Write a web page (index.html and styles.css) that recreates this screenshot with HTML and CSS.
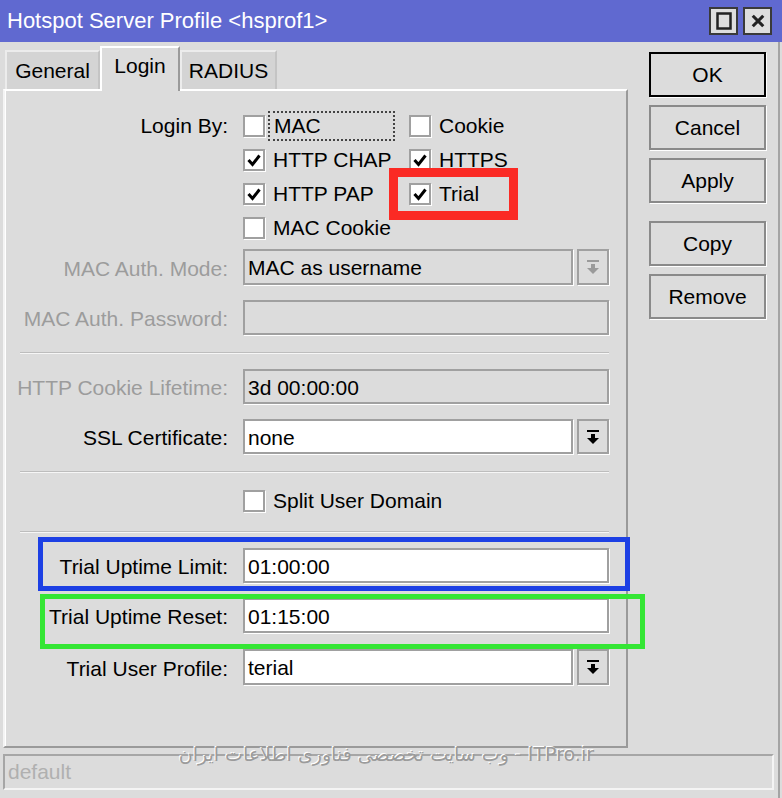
FILE: index.html
```html
<!DOCTYPE html>
<html lang="en">
<head>
  <meta charset="UTF-8" />
  <meta name="viewport" content="width=device-width, initial-scale=1.0" />
  <title>Hotspot Server Profile</title>
  <link rel="stylesheet" href="styles.css">
</head>
<body>
  <div class="window">
    <header class="titlebar">
      <span class="title">Hotspot Server Profile &lt;hsprof1&gt;</span>
      <div class="title-buttons">
        <span class="tbtn">
          <svg viewBox="0 0 16 18" width="16" height="18"><rect x="1.5" y="1.5" width="13" height="15" fill="none" stroke="#222" stroke-width="2.5"/></svg>
        </span>
        <span class="tbtn">
          <svg viewBox="0 0 16 16" width="14" height="14"><path d="M2 2 L14 14 M14 2 L2 14" stroke="#222" stroke-width="3.5"/></svg>
        </span>
      </div>
    </header>

    <div class="frame">
      <div class="content">
        <div class="left">
          <nav class="tabs">
            <span class="tab tab-general">General</span>
            <span class="tab tab-login active">Login</span>
            <span class="tab tab-radius">RADIUS</span>
          </nav>

          <section class="panel">
            <div class="row login-by">
              <label>Login By:</label>
              <div class="checks">
                <span class="check"><span class="box"></span><span class="focus">MAC</span></span>
                <span class="check"><span class="box"></span><span class="text">Cookie</span></span>
                <span class="check"><span class="box checked"><svg viewBox="0 0 14 14" width="14" height="14"><path d="M1.5 7 L5.5 11.5 L12.5 2.5" fill="none" stroke="#000" stroke-width="3"/></svg></span><span class="text">HTTP CHAP</span></span>
                <span class="check"><span class="box checked"><svg viewBox="0 0 14 14" width="14" height="14"><path d="M1.5 7 L5.5 11.5 L12.5 2.5" fill="none" stroke="#000" stroke-width="3"/></svg></span><span class="text">HTTPS</span></span>
                <span class="check"><span class="box checked"><svg viewBox="0 0 14 14" width="14" height="14"><path d="M1.5 7 L5.5 11.5 L12.5 2.5" fill="none" stroke="#000" stroke-width="3"/></svg></span><span class="text">HTTP PAP</span></span>
                <span class="check"><span class="box checked"><svg viewBox="0 0 14 14" width="14" height="14"><path d="M1.5 7 L5.5 11.5 L12.5 2.5" fill="none" stroke="#000" stroke-width="3"/></svg></span><span class="text">Trial</span></span>
                <span class="check"><span class="box"></span><span class="text">MAC Cookie</span></span>
              </div>
            </div>

            <div class="row mode">
              <label class="disabled">MAC Auth. Mode:</label>
              <div class="combo">
                <span class="field disabled-field">MAC as username</span>
                <span class="drop disabled-drop">
                  <svg viewBox="0 0 12 14" width="12" height="14"><rect x="0" y="0" width="12" height="2" fill="#9a9a9a"/><rect x="4" y="4" width="4" height="4" fill="#9a9a9a"/><path d="M0 8 H12 L6 14 Z" fill="#9a9a9a"/></svg>
                </span>
              </div>
            </div>

            <div class="row">
              <label class="disabled">MAC Auth. Password:</label>
              <span class="field disabled-field"></span>
            </div>

            <div class="sep"></div>

            <div class="row">
              <label class="disabled">HTTP Cookie Lifetime:</label>
              <span class="field disabled-field">3d 00:00:00</span>
            </div>

            <div class="row">
              <label>SSL Certificate:</label>
              <div class="combo">
                <span class="field">none</span>
                <span class="drop">
                  <svg viewBox="0 0 12 14" width="12" height="14"><rect x="0" y="0" width="12" height="2" fill="#000"/><rect x="4" y="4" width="4" height="4" fill="#000"/><path d="M0 8 H12 L6 14 Z" fill="#000"/></svg>
                </span>
              </div>
            </div>

            <div class="sep sep-2"></div>

            <div class="row split">
              <span></span>
              <span class="check"><span class="box"></span><span class="text">Split User Domain</span></span>
            </div>

            <div class="sep sep-3"></div>

            <div class="row">
              <label>Trial Uptime Limit:</label>
              <span class="field">01:00:00</span>
            </div>

            <div class="row">
              <label>Trial Uptime Reset:</label>
              <span class="field">01:15:00</span>
            </div>

            <div class="row profile">
              <label>Trial User Profile:</label>
              <div class="combo">
                <span class="field">terial</span>
                <span class="drop">
                  <svg viewBox="0 0 12 14" width="12" height="14"><rect x="0" y="0" width="12" height="2" fill="#000"/><rect x="4" y="4" width="4" height="4" fill="#000"/><path d="M0 8 H12 L6 14 Z" fill="#000"/></svg>
                </span>
              </div>
            </div>
          </section>
        </div>

        <div class="actions">
          <button class="default">OK</button>
          <button>Cancel</button>
          <button>Apply</button>
          <button class="copy">Copy</button>
          <button>Remove</button>
        </div>
      </div>

      <div class="statusbar">default</div>
    </div>

    <div class="watermark" dir="rtl">ITPro.ir - وب سایت تخصصی فناوری اطلاعات ایران</div>

    <div class="mark mark-red"></div>
    <div class="mark mark-blue"></div>
    <div class="mark mark-green"></div>
  </div>
</body>
</html>
```

FILE: styles.css
```css
:root {
  --bg: #dcdcdc;
  --title: #6069d0;
  --edge: #9a9a9a;
  --muted: #9c9c9c;
  --font: 'Liberation Sans', Arial, sans-serif;
}

* {
  box-sizing: border-box;
}

body {
  margin: 0;
  background: var(--bg);
  font-family: var(--font);
  font-size: 21px;
  color: #000;
}

.window {
  position: relative;
  width: 782px;
  height: 798px;
  overflow: hidden;
}

/* title bar */
.titlebar {
  height: 42px;
  background: var(--title);
  display: flex;
  align-items: center;
  justify-content: space-between;
  padding: 0 10px 0 7px;
}

.title {
  color: #fff;
  font-size: 22px;
}

.title-buttons {
  display: flex;
  gap: 5px;
}

.tbtn {
  width: 29px;
  height: 28px;
  background: #dedede;
  border: 2px solid #3a3a3a;
  display: flex;
  align-items: center;
  justify-content: center;
}

/* body of the window */
.frame {
  width: 780px;
  height: 756px;
  border-right: 2px solid #a4a4a4;
}

.content {
  display: flex;
  gap: 21px;
  padding-left: 3px;
}

.left {
  width: 625px;
  padding-top: 4px;
}

.tabs {
  display: flex;
  align-items: flex-end;
  height: 43px;
  padding-left: 2px;
}

.tab {
  height: 39px;
  display: flex;
  align-items: center;
  justify-content: center;
  background: #d4d4d4;
  border: 2px solid #c4c4c4;
  border-top-color: #ececec;
  border-left-color: #ececec;
  border-bottom: none;
}

.tab-general { width: 95px; }
.tab-login { width: 80px; }
.tab-radius { width: 97px; }

.tab.active {
  position: relative;
  z-index: 1;
  height: 45px;
  margin-bottom: -2px;
  padding-bottom: 8px;
  background: var(--bg);
  border-color: #fff;
  border-right-color: #9a9a9a;
}

.panel {
  height: 659px;
  border: 2px solid var(--edge);
  border-top-color: #fff;
  border-left-color: #f4f4f4;
  box-shadow: inset 1px 0 0 #fff;
  padding: 18px 17px 0 0;
}

.row {
  display: grid;
  grid-template-columns: 223px 1fr;
  column-gap: 15px;
  align-items: center;
  height: 35px;
  margin-top: 15px;
}

.row label {
  text-align: right;
  white-space: nowrap;
  padding-top: 3px;
}

.row label.disabled {
  color: var(--muted);
}

.login-by {
  height: auto;
  margin-top: 0;
  align-items: start;
}

.login-by label {
  line-height: 34px;
  padding-top: 0;
}

.checks {
  display: grid;
  grid-template-columns: 166px auto;
  grid-auto-rows: 34px;
  align-items: center;
}

.check {
  display: flex;
  align-items: center;
  gap: 8px;
}

.box {
  width: 22px;
  height: 22px;
  flex: none;
  background: #fff;
  border: 2px solid #a0a0a0;
  box-shadow: 1px 1px 0 #fff;
  display: flex;
  align-items: center;
  justify-content: center;
}

.focus {
  width: 127px;
  margin-left: -5px;
  padding: 1px 4px;
  border: 2px dotted #444;
}

.mode {
  margin-top: 4px;
  height: 36px;
}

.combo {
  display: flex;
  gap: 4px;
  height: 100%;
}

.field {
  display: flex;
  align-items: center;
  height: 100%;
  flex: 1;
  padding-left: 3px;
  padding-top: 2px;
  background: #fff;
  border: 2px solid #a0a0a0;
  box-shadow: 1px 1px 0 #fff;
  white-space: nowrap;
}

.field.disabled-field {
  background: var(--bg);
}

.drop {
  width: 32px;
  height: 100%;
  flex: none;
  display: flex;
  align-items: center;
  justify-content: center;
  background: var(--bg);
  border: 2px solid #a0a0a0;
  box-shadow: 1px 1px 0 #fff;
}

.sep {
  margin: 17px 0 0 15px;
  border-top: 1px solid #bdbdbd;
  border-bottom: 1px solid #f6f6f6;
}

.sep-3 {
  margin-top: 20px;
}

.split {
  height: 22px;
  margin-top: 16px;
}

.profile {
  margin-top: 16px;
  height: 36px;
}

/* side buttons */
.actions {
  display: flex;
  flex-direction: column;
  gap: 8px;
  padding-top: 10px;
}

.actions button {
  width: 117px;
  height: 45px;
  font-family: var(--font);
  font-size: 21px;
  color: #000;
  background: var(--bg);
  border: 2px solid #8a8a8a;
  box-shadow: 1px 1px 0 #fff;
  padding: 0;
}

.actions button.default {
  border-color: #000;
}

.actions button.copy {
  margin-top: 10px;
}

.statusbar {
  margin: 6px 0 0 3px;
  width: 771px;
  height: 36px;
  display: flex;
  align-items: center;
  padding-left: 3px;
  color: #b0b0b0;
  border: 2px solid #a6a6a6;
  border-right-color: #f4f4f4;
  border-bottom-color: #f4f4f4;
}

/* overlays */
.watermark {
  position: absolute;
  left: 186px;
  top: 743px;
  width: 408px;
  font-family: 'DejaVu Sans', sans-serif;
  font-size: 19px;
  color: #9b9b9b;
  text-shadow: -1px -1px 0 #fff;
  white-space: nowrap;
}

.mark {
  position: absolute;
  border-style: solid;
}

.mark-red {
  left: 389px;
  top: 168px;
  width: 129px;
  height: 52px;
  border-width: 9px;
  border-color: #fb2a24;
}

.mark-blue {
  left: 38px;
  top: 537px;
  width: 592px;
  height: 54px;
  border-width: 5px;
  border-color: #1d40e4;
}

.mark-green {
  left: 40px;
  top: 594px;
  width: 605px;
  height: 55px;
  border-width: 5px;
  border-color: #34e634;
}
```
